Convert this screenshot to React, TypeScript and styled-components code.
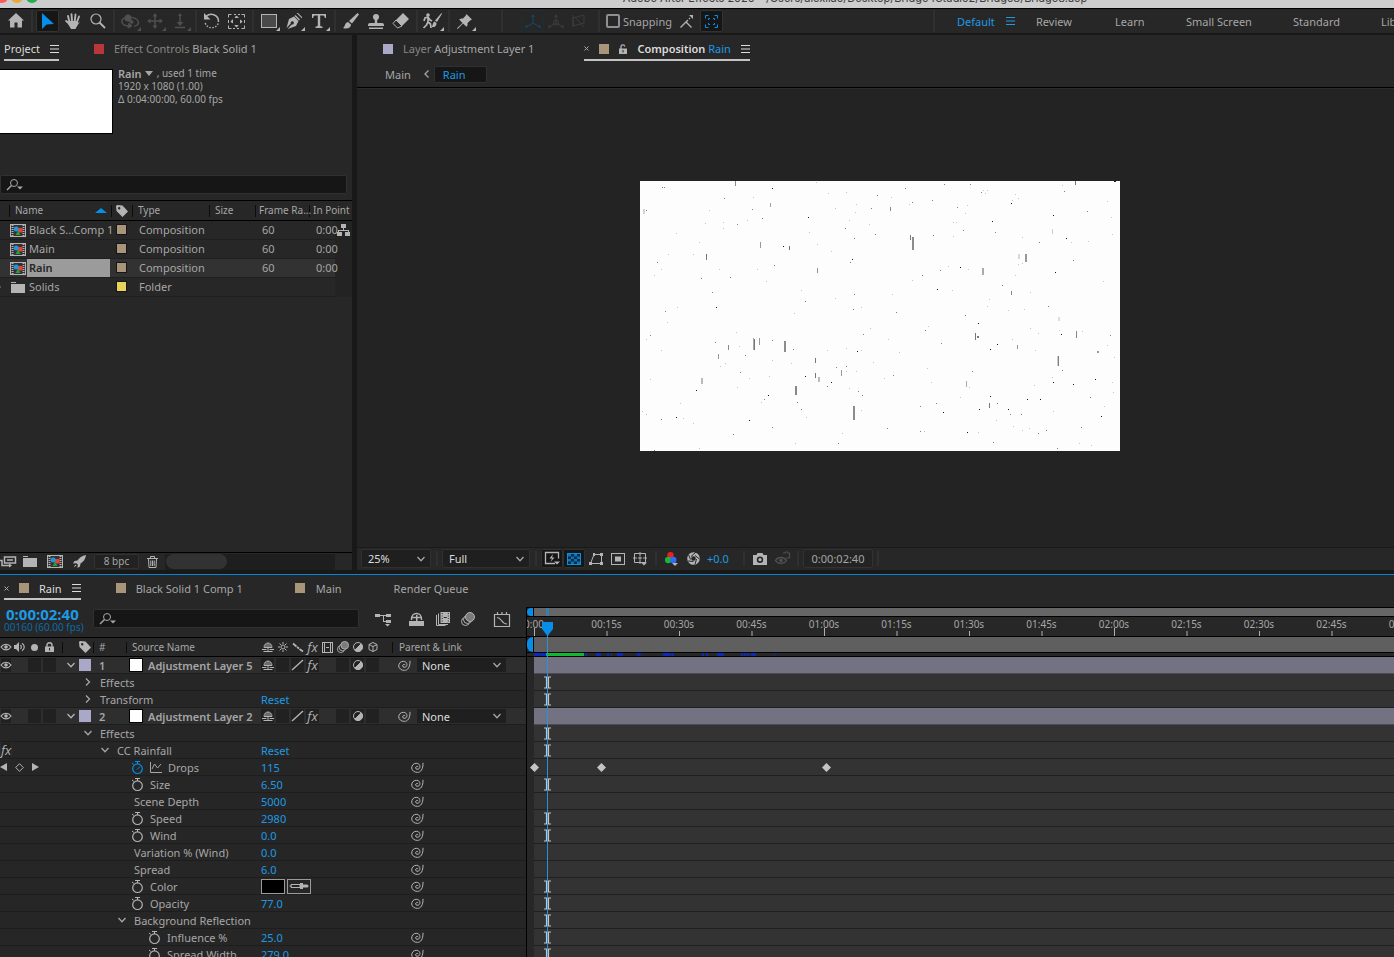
import React from 'react';
import styled, { createGlobalStyle, css } from 'styled-components';

const c = {
  panel: '#272727',
  gutter: '#181818',
  well: '#161616',
  text: '#a6a6a6',
  dim: '#868686',
  bright: '#dcdcdc',
  icon: '#b4b4b4',
  off: '#4f4f4f',
  blue: '#1e9ae4',
  hot: '#068ee8',
  tan: '#a99579',
  lilac: '#a9a8c9',
};

const GlobalStyle = createGlobalStyle`
  * { box-sizing: border-box; }
  html, body { margin: 0; height: 100%; overflow: hidden; background: ${c.gutter}; }
  body { font-family: "Noto Sans", "Open Sans", sans-serif; font-size: 11px; line-height: 13px; color: ${c.text}; }
  button, input, select { font: inherit; color: inherit; margin: 0; padding: 0; border: 0; background: none; border-radius: 0; }
  svg { display: block; flex: none; overflow: visible; }
`;

const Page = styled.div`
  display: flex;
  flex-direction: column;
  height: 100vh;
  min-width: 900px;
  overflow: hidden;
  white-space: nowrap;
`;

/* ---------- window title ---------- */
const TitleBar = styled.header`
  display: flex;
  align-items: flex-end;
  flex: none;
  height: 9px;
  background: #cdcdcd;
  border-bottom: 1px solid #000;
  overflow: hidden;
`;
const Lights = styled.div`
  display: flex;
  gap: 3px;
  margin: 0 0 5px -4px;
`;
const Light = styled.i<{ $c: string }>`
  width: 12px;
  height: 12px;
  border-radius: 50%;
  background: ${p => p.$c};
`;
const Title = styled.h1`
  flex: 1;
  margin: 0 0 2px 278px;
  text-align: center;
  font: 400 11px/16px Inter, "Liberation Sans", sans-serif;
  color: #3c3c3c;
`;

/* ---------- tool bar ---------- */
const Toolbar = styled.nav`
  display: flex;
  align-items: stretch;
  flex: none;
  height: 26px;
  background: ${c.panel};
  border-bottom: 2px solid ${c.gutter};
`;
const Rule = styled.i`
  flex: none;
  width: 2px;
  margin: 1px 0;
  background: #303030;
`;
const Group = styled.div<{ $grow?: boolean; $w?: number }>`
  display: flex;
  align-items: center;
  padding: 0 3px 0 2px;
  ${p => p.$grow && 'flex: 1;'}
  ${p => p.$w && `width: ${p.$w}px;`}
`;
const Tool = styled.button<{ $w?: number; $on?: boolean; $off?: boolean }>`
  position: relative;
  display: grid;
  place-items: center;
  flex: none;
  width: ${p => p.$w ?? 25}px;
  height: 22px;
  color: ${p => (p.$off ? c.off : c.icon)};
  ${p =>
    p.$on &&
    css`
      width: 23px;
      margin: 0 1px;
      background: ${c.well};
      box-shadow: inset 0 0 0 1px #333;
      color: ${c.hot};
      border-radius: 2px;
    `}
`;
const Corner = styled.i`
  position: absolute;
  right: 1px;
  bottom: 1px;
  border-left: 4px solid transparent;
  border-bottom: 4px solid currentColor;
`;
const AxisGroup = styled.div`
  display: flex;
  align-items: center;
  width: 95px;
  padding-left: 18px;
`;
const AxisTool = styled(Tool).attrs({ $w: 23 })`
  color: #3c3c3c;
`;
const AxisOn = styled(AxisTool)`
  color: #12476a;
  box-shadow: inset 0 0 0 1px #1f2c34;
`;
const SnapLabel = styled.label`
  display: flex;
  align-items: center;
  gap: 3px;
  margin-left: 4px;
  width: 68px;
`;
const Check = styled.input`
  appearance: none;
  width: 14px;
  height: 14px;
  border: 2px solid #8f8f8f;
  border-radius: 2px;
`;
const Workspaces = styled.div`
  display: flex;
  align-items: center;
  width: 459px;
  padding-left: 22px;
  overflow: hidden;
`;
const Workspace = styled.a<{ $w: number; $on?: boolean }>`
  display: flex;
  align-items: center;
  justify-content: space-between;
  flex: none;
  width: ${p => p.$w}px;
  color: ${p => (p.$on ? c.blue : c.text)};
  text-decoration: none;
  svg { margin-right: 21px; }
`;

/* ---------- panels ---------- */
const Upper = styled.main`
  display: flex;
  flex: none;
  gap: 5px;
`;
const Panel = styled.section<{ $w?: number }>`
  display: flex;
  flex-direction: column;
  background: ${c.panel};
  ${p => (p.$w ? `flex: 0 0 ${p.$w}px;` : 'flex: 1; min-width: 0;')}
`;
const Tabs = styled.div<{ $h: number; $pad: number }>`
  display: flex;
  flex: none;
  height: ${p => p.$h}px;
  padding-left: ${p => p.$pad}px;
`;
const Tab = styled.button<{ $on?: boolean; $after: number; $gap?: number }>`
  display: flex;
  align-items: center;
  gap: ${p => p.$gap ?? 10}px;
  flex: none;
  margin-right: ${p => p.$after}px;
  padding-top: 3px;
  border-bottom: 2px solid ${p => (p.$on ? '#c4c4c4' : 'transparent')};
  color: ${p => (p.$on ? c.bright : c.text)};
  b { font-weight: 600; }
`;
const Dim = styled.span`
  color: ${c.dim};
`;
const Blue = styled.span`
  color: ${c.blue};
`;
const Swatch = styled.i<{ $c: string; $s?: number }>`
  flex: none;
  width: ${p => p.$s ?? 10}px;
  height: ${p => p.$s ?? 10}px;
  background: ${p => p.$c};
`;

/* ---------- project panel ---------- */
const Info = styled.div`
  display: flex;
  gap: 5px;
  height: 65px;
  margin: 8px 0 41px;
`;
const Thumb = styled.div`
  width: 113px;
  background: #fff;
  border: 1px solid #000;
  border-left: 0;
`;
const Meta = styled.div`
  margin-top: -2px;
  font-size: 10px;
  line-height: 13px;
  p { display: flex; align-items: center; margin: 0; }
  b { font-size: 11px; font-weight: 600; }
  svg { margin: 0 4px 0 3px; }
`;
const Search = styled.label<{ $w: number }>`
  display: flex;
  align-items: center;
  flex: none;
  width: ${p => p.$w}px;
  height: 19px;
  padding-left: 6px;
  background: ${c.well};
  border: 1px solid #303030;
  border-radius: 2px;
  input { flex: 1; min-width: 0; outline: 0; }
`;
const Items = styled.table`
  table-layout: fixed;
  width: 100%;
  margin-top: 6px;
  border-collapse: collapse;
  th {
    height: 20px;
    padding: 0;
    border-top: 1px solid #000;
    border-bottom: 1px solid #000;
    font-size: 10px;
    font-weight: 400;
    text-align: left;
  }
  td {
    height: 19px;
    padding: 0 0 2px 7px;
    border-bottom: 1px solid #1f1f1f;
    line-height: 13px;
  }
  td:last-child { padding: 0; background: #232323; border: 0; }
`;
const Col = styled.col<{ $w: number }>`
  width: ${p => p.$w}px;
`;
const Head = styled.div<{ $ml?: number; $pad?: number }>`
  display: flex;
  align-items: center;
  justify-content: space-between;
  height: 12px;
  margin-left: ${p => p.$ml ?? 0}px;
  padding-left: ${p => p.$pad ?? 5}px;
  border-left: 1px solid #0c0c0c;
  svg { margin-right: 4px; }
`;
const ItemRow = styled.tr<{ $on?: boolean }>`
  background: ${p => (p.$on ? '#323232' : 'transparent')};
  td:first-child { padding: 0; }
`;
const ItemName = styled.div<{ $on?: boolean }>`
  position: relative;
  display: flex;
  align-items: center;
  height: 18px;
  padding-left: 10px;
  > span {
    flex: 1;
    margin: 0 1px;
    padding-left: 2px;
    line-height: 18px;
    ${p => p.$on && 'background: #9b9b9b; color: #262626; font-weight: 600;'}
  }
`;
const IconSlot = styled.i`
  display: grid;
  place-items: center;
  flex: none;
  width: 16px;
  color: ${c.icon};
`;
const Twirl = styled.i`
  position: absolute;
  left: -2px;
  border: 3px solid transparent;
  border-left-color: ${c.dim};
`;
const Chip = styled.span`
  display: grid;
  width: 11px;
  margin: 1px 0 0 -2px;
  border: 1px solid #161616;
`;
const ProjectFoot = styled.footer`
  display: flex;
  align-items: center;
  height: 18px;
  margin-top: auto;
  border-top: 1px solid #000;
`;
const FootButton = styled.button<{ $w: number }>`
  display: grid;
  place-items: center;
  flex: none;
  width: ${p => p.$w}px;
  height: 17px;
  color: ${c.icon};
`;
const Depth = styled.button`
  width: 45px;
  height: 15px;
  margin-left: 2px;
  font-size: 10px;
  border: 1px solid #323232;
  border-radius: 2px;
  background: #222;
`;
const ScrollTrack = styled.div`
  width: 170px;
  height: 16px;
  background: #1e1e1e;
`;
const ScrollThumb = styled.div`
  width: 61px;
  height: 15px;
  margin-left: 1px;
  border-radius: 8px;
  background: #323232;
`;

/* ---------- composition viewer ---------- */
const Crumbs = styled.div`
  display: flex;
  align-items: center;
  height: 27px;
  padding-left: 28px;
  gap: 11px;
  border-bottom: 1px solid #000;
`;
const Crumb = styled.button<{ $on?: boolean }>`
  ${p =>
    p.$on &&
    css`
      width: 53px;
      height: 17px;
      margin-left: -9px;
      padding-left: 8px;
      text-align: left;
      color: ${c.blue};
      background: ${c.well};
      border: 1px solid #303030;
      border-radius: 2px;
    `}
`;
const Viewport = styled.div`
  display: flex;
  justify-content: center;
  padding: 92px 0 96px 9px;
  background: #232323;
  border-top: 1px solid #2c2c2c;
`;
const Frame = styled.svg`
  width: 480px;
  height: 270px;
  background: #fefdfd;
`;
const ViewerBar = styled.footer`
  display: flex;
  align-items: center;
  height: 23px;
  padding: 0 0 1px 4px;
  border-top: 1px solid #1a1a1a;
`;
const PickerBox = styled.span<{ $w: number; $h: number; $flat?: boolean }>`
  display: grid;
  flex: none;
  align-items: center;
  width: ${p => p.$w}px;
  height: ${p => p.$h}px;
  background: #1f1f1f;
  ${p => !p.$flat && 'border: 1px solid #303030; border-radius: 2px;'}
  color: ${c.bright};
  select, svg { grid-area: 1 / 1; }
  select { appearance: none; width: 100%; padding-left: ${p => (p.$flat ? 5 : 6)}px; line-height: 13px; }
  svg { justify-self: end; margin-right: 4px; pointer-events: none; color: ${c.text}; }
`;
const Bar = styled.i<{ $l: number; $r: number }>`
  flex: none;
  width: 2px;
  height: 15px;
  margin: 0 ${p => p.$r}px 0 ${p => p.$l}px;
  background: #303030;
`;
const ViewTool = styled.button<{ $box?: boolean; $off?: boolean }>`
  display: grid;
  place-items: center;
  flex: none;
  width: 22px;
  height: 19px;
  color: ${p => (p.$off ? c.off : c.icon)};
  ${p => p.$box && `background: ${c.well}; box-shadow: inset 0 0 0 1px #303030; border-radius: 2px;`}
`;
const Exposure = styled.button`
  width: 32px;
  padding-left: 3px;
  text-align: left;
  color: ${c.blue};
`;
const TimeBox = styled.button`
  width: 70px;
  height: 19px;
  border: 1px solid #323232;
  border-radius: 2px;
  background: #232323;
`;

/* ---------- timeline ---------- */
const Timeline = styled.section`
  display: flex;
  flex-direction: column;
  flex: 1;
  min-height: 0;
  margin-top: 4px;
  border-top: 1px solid #0b84d8;
  background: ${c.panel};
`;
const Panes = styled.div`
  display: flex;
  flex: 1;
  min-height: 0;
  margin-top: 7px;
`;
const Outline = styled.div`
  flex: 0 0 527px;
  border-right: 1px solid #000;
`;
const OutlineHead = styled.div`
  display: flex;
  height: 31px;
  padding-left: 4px;
  border-bottom: 1px solid #000;
`;
const Clock = styled.div`
  width: 89px;
  color: ${c.blue};
  font-size: 10px;
  strong { display: block; padding-left: 2px; font-size: 15px; line-height: 14px; }
  span { display: block; color: #0b6aa8; }
`;
const HeadTools = styled.div`
  display: flex;
  align-items: center;
  height: 24px;
  margin-left: 10px;
  color: ${c.icon};
`;
const SearchSlot = styled.div`
  padding-top: 2px;
`;
const LayerGrid = styled.div<{ $head?: boolean }>`
  display: grid;
  grid-template-columns: 62px 17px 14px 33px 134px 120px 37px 88px;
  align-items: center;
  height: ${p => (p.$head ? 19 : 17)}px;
  border-bottom: 1px solid ${p => (p.$head ? '#000' : '#1d1d1d')};
  background: ${p => (p.$head ? c.panel : '#2e2e2e')};
  font-size: ${p => (p.$head ? 10 : 11)}px;
`;
const Cells = styled.div`
  display: flex;
  color: ${c.icon};
`;
const Cell = styled.button<{ $w?: number; $box?: boolean }>`
  display: grid;
  place-items: center;
  flex: none;
  width: ${p => p.$w ?? 15}px;
  height: 14px;
  ${p => p.$box && 'background: #212121; border: 0 solid #2e2e2e; border-width: 0 1px; background-clip: padding-box;'}
`;
const ColHead = styled.span<{ $bar?: boolean }>`
  display: flex;
  align-items: center;
  height: 11px;
  padding-left: 5px;
  border-left: ${p => (p.$bar ? '1px solid #0c0c0c' : '0')};
`;
const ParentHead = styled.span`
  grid-column: span 2;
  height: 11px;
  margin-left: 12px;
  padding-left: 6px;
  border-left: 1px solid #0c0c0c;
  line-height: 11px;
`;
const Center = styled.span<{ $pad?: number }>`
  display: grid;
  place-items: center;
  padding-left: ${p => p.$pad ?? 0}px;
  color: ${c.icon};
`;
const Num = styled.b`
  padding-left: 6px;
  font-weight: 600;
`;
const LayerName = styled.div`
  display: flex;
  align-items: center;
  gap: 5px;
  padding-left: 3px;
  font-weight: 600;
`;
const Solid = styled.i`
  width: 14px;
  height: 14px;
  background: #fff;
  border: 1px solid #000;
`;
const PropRow = styled.div`
  display: grid;
  grid-template-columns: 62px 199px 149px 14px;
  align-items: center;
  height: 17px;
  border-bottom: 1px solid #1d1d1d;
  background: #262626;
`;
const PropLabel = styled.div<{ $depth: number; $watch?: boolean }>`
  display: flex;
  align-items: center;
  gap: ${p => (p.$watch ? 6 : 7)}px;
  padding-left: ${p => 21 + 17 * p.$depth - (p.$watch ? 3 : 0)}px;
`;
const Value = styled.button`
  justify-self: start;
  color: ${c.blue};
`;
const ColorPair = styled.div`
  display: flex;
  gap: 2px;
`;
const ColorBox = styled.button<{ $c: string }>`
  display: grid;
  place-items: center;
  width: 24px;
  height: 15px;
  border: 1px solid #9a9a9a;
  background: ${p => p.$c};
  color: ${c.icon};
`;
const KeyNav = styled.div`
  display: flex;
  align-items: center;
  gap: 8px;
  color: ${c.icon};
`;

const Tracks = styled.div`
  position: relative;
  flex: 1;
  min-width: 0;
  overflow: hidden;
`;
const Navigator = styled.div`
  display: flex;
  height: 10px;
  border: solid #000;
  border-width: 1px 0;
  background: #666;
`;
const WorkArea = styled.div`
  display: flex;
  height: 17px;
  border: solid #000;
  border-width: 1px 0;
  background: #5f5f5f;
`;
const Handle = styled.i`
  width: 7px;
  border-right: 1px solid #000;
  border-radius: 6px 0 0 6px;
  background: ${c.hot};
`;
const HandleSlot = styled.div`
  display: flex;
  background: ${c.panel};
`;
const NavMark = styled.i`
  width: 3px;
  margin-left: 12px;
  background: #3a7fae;
`;
const Ruler = styled.div`
  display: flex;
  height: 19px;
  margin-left: -29px;
`;
const Tick = styled.div<{ $wide: boolean; $kind: 'long' | 'short' | 'minor' }>`
  display: flex;
  flex-direction: column;
  align-items: center;
  justify-content: space-between;
  flex: none;
  width: ${p => (p.$wide ? 73 : 72)}px;
  font-size: 10px;
  line-height: 14px;
  &::after {
    content: '';
    width: ${p => (p.$kind === 'minor' ? 2 : 1)}px;
    height: ${p => (p.$kind === 'long' ? 8 : 5)}px;
    margin-top: -3px;
    background: ${p => (p.$kind === 'minor' ? '#6c6c6c' : '#b0b0b0')};
  }
`;
const Cache = styled.svg`
  width: 100%;
  height: 3px;
`;
const CacheRow = styled.div`
  height: 4px;
  border-bottom: 1px solid #000;
`;
const Track = styled.div<{ $layer?: boolean }>`
  position: relative;
  height: 17px;
  margin-left: 7px;
  border-bottom: 1px solid ${p => (p.$layer ? '#4c4c58' : '#202020')};
  background: ${p => (p.$layer ? '#727282' : '#333')};
`;
const Marker = styled.i`
  position: absolute;
  top: 2px;
  width: 9px;
  margin-left: -4px;
  color: #c4c4c4;
`;
const Playhead = styled.i`
  position: absolute;
  top: 15px;
  bottom: 0;
  left: 14px;
  width: 13px;
  pointer-events: none;
  &::after {
    content: '';
    position: absolute;
    top: 13px;
    bottom: 0;
    left: 6px;
    width: 1px;
    background: #2a90d8;
  }
`;

/* ---------- icons ---------- */
type IconProps = { w: number; h: number; sw?: number; fill?: boolean; children: React.ReactNode };
const Icon = ({ w, h, sw = 1, fill, children }: IconProps) => (
  <svg width={w} height={h} viewBox={`0 0 ${w} ${h}`} fill={fill ? 'currentColor' : 'none'} stroke={fill ? 'none' : 'currentColor'} strokeWidth={sw} aria-hidden="true">
    {children}
  </svg>
);
const Menu = () => <Icon w={9} h={8}><path d="M0 .5h9M0 4h9M0 7.5h9" /></Icon>;
const Chevron = ({ dir = 'down' }: { dir?: 'down' | 'right' | 'left' }) => (
  <Icon w={10} h={8} sw={1.3}>
    <path d={dir === 'down' ? 'M1.5 2 5 5.7 8.5 2' : dir === 'right' ? 'M3 .5 6.5 4 3 7.5' : 'M6.5 .5 3 4l3.5 3.5'} />
  </Icon>
);
const Close = () => <Icon w={5} h={5}><path d="M.5 .5l4 4M4.5 .5l-4 4" stroke={c.text} /></Icon>;
const HomeIcon = () => <Icon w={16} h={15} fill><path d="M8 0 0 7.5h2V14.5h4.5V9.5h3v5H14V7.5h2z" /></Icon>;
const ArrowIcon = () => <Icon w={12} h={16} fill><path d="M0 0v16l4.500-4.500L12 11z" /></Icon>;
const HandIcon = () => (
  <Icon w={16} h={16}>
    <path d="M4.500 9 3 3M7 8 6.500 1.200M9.800 8 10.500 1.500M12 9l2-5.500M4.500 11 1.200 8" strokeWidth={1.900} strokeLinecap="round" />
    <path d="M3.200 8 12.800 8 13 10 15 8.500 11.500 14 10.500 16H6L3 11z" fill="currentColor" stroke="none" />
  </Icon>
);
const ZoomIcon = () => <Icon w={16} h={16} sw={1.2}><circle cx="6" cy="6" r="5" /><path d="M9.500 9.500 15 15" strokeWidth={1.800} /></Icon>;
const OrbitIcon = () => (
  <Icon w={18} h={14}>
    <path d="M8 12C2 12-1 8 2 5s13-2 15 2-3 5-4 5" strokeWidth={1.400} />
    <path d="m8 9-1 5 4-2z" fill="currentColor" />
    <circle cx="7" cy="4" r="3.500" fill="currentColor" stroke="none" /><path d="M7 5l5 4" strokeWidth={3} />
  </Icon>
);
const MoveIcon = () => (
  <Icon w={16} h={16}>
    <path d="M8 2v12M2 8h12" strokeWidth={1.500} />
    <path d="M8 0 5.500 3.500h5zM8 16l-2.500-3.500h5zM0 8l3.500-2.500v5zM16 8l-3.500-2.500v5z" fill="currentColor" stroke="none" />
  </Icon>
);
const DollyIcon = () => (
  <Icon w={12} h={16}>
    <path d="M6 2v10M1 14.500h10" strokeWidth={1.500} />
    <path d="M6 0 4 3h4zM6 13 2.500 9h7z" fill="currentColor" stroke="none" />
  </Icon>
);
const RotateIcon = () => (
  <Icon w={17} h={16}>
    <path d="M3 3.500C8-1 16 2 15.500 9" strokeWidth={1.500} />
    <path d="M15.200 10.500C13 16 4 16.500 2 9.500" strokeWidth={1.400} strokeDasharray="1.5 1.5" />
    <path d="M1 0v6.500h6.500z" fill="currentColor" stroke="none" />
  </Icon>
);
const PanBehindIcon = () => (
  <Icon w={17} h={15}>
    <path d="M.5 3.500v-3h3M6 .5h2M10 .5h2M13.500 .5h3v3M16.500 6v3M16.500 11.500v3h-3M11 14.500H9M7 14.500H5M3.500 14.500h-3v-3M.5 9V6" />
    <circle cx="8.500" cy="7.500" r="4.500" strokeDasharray="3.500 3.500" strokeDashoffset="1.800" />
    <path d="M8.500 1.500 6.500 4h4zM8.500 13.500l-2-2.500h4zM2.500 7.500l2.500-2v4zM14.500 7.500 12 5.500v4z" fill="currentColor" stroke="none" />
  </Icon>
);
const RectIcon = () => <Icon w={16} h={14}><rect x=".5" y=".5" width="15" height="13" fill="#4a4a4a" /></Icon>;
const PenIcon = () => (
  <Icon w={16} h={16} fill>
    <path d="M9.500 2 14 6.500l-1 1-4.500-4.500zM10.500 0h1.500l4 4v1.500z" />
    <path fillRule="evenodd" d="M8 3.500 12.500 8 10 13 1.500 16l4.300-4.600a1.600 1.600 0 1 0-1-.9L.5 15 3 6z" />
  </Icon>
);
const TextIcon = () => <Icon w={14} h={14} fill><path d="M0 0h14v4h-1.200C12.600 2 12 1.500 10.500 1.500H8.200V11c0 1.200.5 1.500 2.300 1.600V14h-7v-1.400c1.800-.1 2.300-.4 2.300-1.600V1.500H3.500C2 1.500 1.400 2 1.200 4H0z" /></Icon>;
const BrushIcon = () => (
  <Icon w={16} h={16} fill>
    <path d="M14.500 0 16 1.500 9 10.500 6 8z" /><path d="M5 9l3 2.500C8 15 4 16.500 0 15c2-.5 1.500-5.500 5-6z" />
  </Icon>
);
const StampIcon = () => (
  <Icon w={16} h={15} fill>
    <circle cx="8" cy="3" r="3" /><path d="M6.800 5h2.400v4H14a2 2 0 0 1 2 2v1H0v-1a2 2 0 0 1 2-2h4.800zM1 13.500h14V15H1z" />
  </Icon>
);
const EraserIcon = () => (
  <Icon w={17} h={16}>
    <path d="M11 0 17 6 10 13 4 7z" fill="currentColor" stroke="none" /><path d="M4 7 1 10.500 5.500 15 10 13z" />
  </Icon>
);
const RotoIcon = () => (
  <Icon w={19} h={16}>
    <circle cx="5" cy="2" r="1.800" fill="currentColor" stroke="none" />
    <path d="M1 8l1-3 3-1 2 3 2 1M5 4.500 5 9l2.500 2L8 15M5 9 3.500 12 .5 15" strokeWidth={1.700} />
    <path d="M18.500 0 19 .8 14 9l-2-1.500zM11.500 8.500l2 1.500c0 4-3 4.500-5 4 1.500-1 1-4.500 3-5.500z" fill="currentColor" stroke="none" />
  </Icon>
);
const PinIcon = () => (
  <Icon w={15} h={15} fill>
    <path d="M9.500 0 15 5.500l-1.500.7L10.500 9c.3 1.500 0 2.700-1 3.800L6 9.500.7 15 0 14.300 5.500 9 2.200 5.500c1-.9 2.300-1.300 3.800-1L8.800 1.500z" />
  </Icon>
);
const AxisIcon = ({ v }: { v: number }) =>
  v === 2 ? (
    <Icon w={13} h={14}><path d="M1 4 12 1v8L1 12zM3.500 3.500 12 13M1 1v12" /></Icon>
  ) : (
    <Icon w={16} h={14}>
      <path d="M8 1.500V9L2 12.500M8 9l6 3.500" />{v === 1 && <circle cx="8" cy="8.500" r="2.500" />}
      <path d="M8 0 6 3h4zM0 14l1-3.500 2.500 2.500zM16 14l-1-3.500-2.500 2.500z" fill="currentColor" stroke="none" />
    </Icon>
  );
const SnapArrow = () => (
  <Icon w={13} h={13}>
    <path d="M.5 12.500 6 7l5.500 5.500M6 7l2-2M9 4l1-1" strokeWidth={1.300} /><path d="M9 0h4v4z" fill="currentColor" stroke="none" />
  </Icon>
);
const SnapBox = () => (
  <Icon w={13} h={13}>
    <path d="M.5 3.500v-3h3M9.500 .5h3v3M12.500 9.500v3h-3M3.500 12.500h-3v-3" /><path d="M3.500 5V3.500H5M8 3.500h1.500V5M9.500 8v1.500H8M5 9.500H3.500V8" />
  </Icon>
);
const SearchIcon = () => (
  <Icon w={16} h={12}>
    <circle cx="7" cy="4" r="3.500" /><path d="M4.500 6.500 0 11" strokeWidth={1.500} /><path d="M10 7.500h6L13 10.500z" fill="currentColor" stroke="none" />
  </Icon>
);
const TagIcon = () => <Icon w={12} h={12} fill><path fillRule="evenodd" d="M0 1 1 0l5.500.5L12 6.500 6.500 12 .5 6zM3.200 2a1.200 1.200 0 1 0 0 2.400 1.200 1.200 0 0 0 0-2.400z" fill={c.icon} /></Icon>;
const CompIcon = () => (
  <Icon w={16} h={13}>
    <rect x=".5" y=".5" width="15" height="12" fill="#333" />
    <path d="M2.500 1v11M13.500 1v11" strokeWidth={2} strokeDasharray="1 1" />
    <rect x="8" y="4" width="4.500" height="4.500" fill="#e8403a" stroke="none" />
    <circle cx="6.200" cy="5" r="2.500" fill="#2196dc" stroke="none" />
    <path d="M8 6.500 10.500 11h-5z" fill="#1fa33c" stroke="none" />
  </Icon>
);
const FolderIcon = () => <Icon w={14} h={11} fill><path d="M0 0h5v1H0zM0 2h14v9H0z" /></Icon>;
const FlowIcon = () => <Icon w={13} h={12} fill><path d="M4 0h5v4H7v2h5v2h1v4H8V8h3V7H2v1h3v4H0V8h1V6h5V4H4z" /></Icon>;
const InterpretIcon = () => (
  <Icon w={14} h={12}>
    <path d="M2.500 1h11v6h-11zM5 4h6" strokeWidth={1.500} /><path d="M-4 4.500H0v5h9" strokeWidth={1.500} /><path d="M7 7.500v4l3-2z" fill="currentColor" stroke="none" />
  </Icon>
);
const RocketIcon = () => <Icon w={13} h={13} fill><path d="M13 0C9 .5 6 3 4.500 5.500L1.500 6 0 8.500l3.500-.3 1.300 1.300L4.500 13l2.500-1.500.5-3C10.500 7 12.500 4 13 0zM2.500 9.500.5 12.500l3-2z" /></Icon>;
const TrashIcon = () => <Icon w={11} h={12}><path d="M0 2.500h11M3.500 2V.5h4V2M1.500 2.500l.5 9h7l.5-9M3.800 4.500v5.500M5.500 4.500v5.500M7.200 4.500v5.500" /></Icon>;
const LockOpen = () => (
  <Icon w={8} h={10}><rect x="0" y="4.500" width="8" height="5.500" fill={c.icon} stroke="none" /><path d="M2 5V2.500C2 .5 5.500 .3 5.800 2.500" strokeWidth={1.300} stroke={c.icon} /><path d="M4 6v2.500" stroke={c.panel} /></Icon>
);
const FastPreview = () => (
  <Icon w={15} h={13}><path d="M10 11.500H.5v-11h13v6" strokeWidth={1.300} /><path d="M8 2 4.500 6.500H7L5.500 10 9.500 5.500H7zM9 9.500h6l-3 3z" fill="currentColor" stroke="none" /></Icon>
);
const Checker = () => (
  <Icon w={14} h={12}><rect x=".5" y=".5" width="13" height="11" stroke={c.hot} fill="#0a2b40" /><path d="M1 1h3v2.500H1zM7 1h3v2.500H7zM4 3.500h3V6H4zM10 3.500h3V6h-3zM1 6h3v2.500H1zM7 6h3v2.500H7zM4 8.500h3V11H4zM10 8.500h3V11h-3z" fill="#0c74bb" stroke="none" /></Icon>
);
const MaskIcon = () => (
  <Icon w={14} h={12}><path d="M1.500 10.500 5 1.500h7.500v9z" /><path d="M0 9h3v3H0zM4 0h2v3H4zM11 0h3v3h-3zM11 9h3v3h-3z" fill="currentColor" stroke="none" /></Icon>
);
const SafeIcon = () => <Icon w={14} h={12}><rect x=".5" y=".5" width="13" height="11" /><rect x="4" y="3.500" width="6" height="5" fill="currentColor" stroke="none" /></Icon>;
const GuideIcon = () => (
  <Icon w={15} h={14}><path d="M1.500 1.500h11v9h-11zM7 0v4M7 7.500V12M0 6h4M10 6h4M5 6h4M7 4.500v3" /><path d="M8 10.500h6l-3 3z" fill="currentColor" stroke="none" /></Icon>
);
const RgbIcon = () => (
  <Icon w={13} h={14} fill><circle cx="5.500" cy="3.200" r="3.200" fill="#f21d1d" /><circle cx="3.200" cy="8" r="3.200" fill="#15b83c" /><circle cx="8.300" cy="8" r="3.200" fill="#2f6cf5" /><path d="M7 11h6l-3 3z" /></Icon>
);
const ApertureIcon = () => (
  <Icon w={13} h={13}><circle cx="6.500" cy="6.500" r="4.300" strokeWidth={4} /><path d="M4 4.500 9 0M8 3.500l4.500 3.500M9.500 7 8 12.500M6.500 9.500 1 9M3.500 7.500 1.500 2.500" stroke={c.panel} /></Icon>
);
const CameraIcon = () => (
  <Icon w={14} h={12} fill><path fillRule="evenodd" d="M4.500 0h5l1 2H14v10H0V2h3.500zM7 3.500a3.200 3.200 0 1 0 0 6.400 3.200 3.200 0 0 0 0-6.400z" /><circle cx="7" cy="6.700" r="1.600" /></Icon>
);
const ShowSnap = () => (
  <Icon w={15} h={13}><path d="M.5 8.500C3 4.500 9 4.500 11.500 8.500 9 12.500 3 12.500.5 8.500z" strokeWidth={1.400} /><circle cx="6" cy="8.500" r="1.800" fill="currentColor" stroke="none" /><path d="M8 1h2l.5-1h2l.5 1h1.500v5H11" strokeWidth={1.200} /></Icon>
);
const MiniFlow = () => (
  <Icon w={16} h={13} fill><path d="M0 1h5v3H0zM11 1h5v3h-5zM11 7h5v3h-5zM5 2h6v1H9v5h2v1H8V3H5zM10 11h5l-2.500 2.500z" /></Icon>
);
const ShyBar = () => (
  <Icon w={15} h={13}><path d="M0 8h15v5H0zM7 2h1.500v7H7z" fill="currentColor" stroke="none" /><path d="M2.500 7C2 2 5 .5 7.500 .5S13 2 12.500 7M3 4.500h9" strokeWidth={1.400} /></Icon>
);
const FilmIcon = () => (
  <Icon w={14} h={14}>
    <path d="M4.500 0H14v11H4.500z" fill="currentColor" stroke="none" /><path d="M2.500 1.500v11H12M.5 3v10.500H9.500" />
    <path d="M6.200 1v9M12.300 1v9" stroke={c.panel} strokeDasharray="1 1.500" /><path d="M7.800 5.500h3" stroke={c.panel} />
  </Icon>
);
const BlurIcon = ({ s = 14 }: { s?: number }) => (
  <svg width={s} height={s} viewBox="0 0 14 14" fill={c.panel} stroke="currentColor" aria-hidden="true"><circle cx="4.500" cy="9.500" r="4" /><circle cx="6.500" cy="7.500" r="4" /><circle cx="9" cy="5" r="4.500" fill="#7b7b7b" /></svg>
);
const GraphIcon = () => (
  <Icon w={16} h={15}><path d="M.5 2.500h15v12H.5zM3.500 0v2M8 0v2M12.500 0v2M3 5.500c5 0 4 6.500 10 6.500" strokeWidth={1.200} /></Icon>
);
const EyeIcon = () => <Icon w={10} h={8}><path d="M0 4C2.500 .3 7.500 .3 10 4 7.500 7.700 2.500 7.700 0 4z" strokeWidth={1.200} /><circle cx="5" cy="4" r="1.800" fill="currentColor" stroke="none" /></Icon>;
const SpeakerIcon = () => <Icon w={11} h={10}><path d="M0 3h2l3-3v10L2 7H0z" fill="currentColor" stroke="none" /><path d="M6.500 3c1 1 1 3 0 4M8 1.200c3 2 3 5.600 0 7.600" strokeWidth={1.200} /></Icon>;
const DotIcon = () => <Icon w={7} h={7} fill><circle cx="3.500" cy="3.500" r="3.500" /></Icon>;
const LockIcon = () => <Icon w={9} h={10}><rect y="4.500" width="9" height="5.500" fill="currentColor" stroke="none" /><path d="M2 5V3c0-3 5-3 5 0v2" strokeWidth={1.400} /><path d="M4.500 6v2.500" stroke={c.panel} /></Icon>;
const ShyIcon = () => <Icon w={12} h={10}><path d="M2 5.500C2 -.5 10 -.5 10 5.500zM6 1v8M0 7.500h4.500M7.500 7.500H12M1.500 9.500h9M4 2v3.500M8 2v3.500" /></Icon>;
const SunIcon = () => <Icon w={10} h={10}><circle cx="5" cy="5" r="2" /><path d="M5 0v2M5 8v2M0 5h2M8 5h2M1.500 1.500 3 3M8.500 1.500 7 3M1.500 8.500 3 7M8.500 8.500 7 7" /></Icon>;
const QualityIcon = () => <Icon w={10} h={9}><path d="M0 .5 3.500 3.500M4 4 6 5.500M6.500 6 10 8.500" strokeWidth={1.700} /></Icon>;
const SlashIcon = () => <Icon w={11} h={10}><path d="M0 10 11 0" strokeWidth={1.400} /></Icon>;
const FrameBlend = () => <Icon w={11} h={11}><rect x=".5" y=".5" width="10" height="10" /><path d="M2.500 1v9M8.500 1v9M4 5.500h3" /></Icon>;
const AdjustIcon = () => <Icon w={10} h={10}><circle cx="5" cy="5" r="4.500" /><path d="M1.800 8.200A4.500 4.500 0 0 0 8.200 1.800z" fill="currentColor" /></Icon>;
const CubeIcon = () => <Icon w={10} h={10}><path d="M5 .5 9 2.500v5L5 9.500 1 7.500v-5zM1 2.500l4 2 4-2M5 4.500v5" /></Icon>;
const Spiral = () => (
  <Icon w={13} h={11}><path d="M7.200 4.800C6 3.900 4.600 4.700 4.600 6S7 7.800 8.300 6.500 9 1.600 5.800 1.300 .6 3.600 .7 6 3.400 10.500 6.500 10.400 12.200 7.400 12 .8" /></Icon>
);
const Stopwatch = ({ on }: { on?: boolean }) => (
  <Icon w={13} h={13}>
    <g stroke={on ? c.hot : c.icon}><circle cx="6.500" cy="7.700" r="4.800" strokeWidth={1.200} /><path d="M4 .5h5M6.500 .5v2.500M1 2l1.800 1.400" />{on && <path d="M6 8.500 9 5.500" />}</g>
  </Icon>
);
const GraphSmall = () => <Icon w={12} h={11}><path d="M.5 0v10.500H12M2 7l2.500-5 3 4L11 2" /></Icon>;
const Dropper = () => <Icon w={20} h={6}><path d="M.5 3h2M2 1.500h9v3H2z" /><path d="M11 0h3v1.500h4a1.500 1.500 0 0 1 0 3h-4V6h-3z" fill="currentColor" stroke="none" /></Icon>;
const IBeam = () => <Icon w={9} h={13}><path d="M1 1h2.500v11H1M8 1H5.500v11H8" strokeWidth={1.200} /></Icon>;
const Key = () => <Icon w={9} h={13} fill><path d="M4.500 2 9 6.500 4.500 11 0 6.500z" /></Icon>;
const FxMark = styled.em`
  font: italic 400 13px/14px "Open Sans", "Noto Sans", sans-serif;
  color: ${c.icon};
`;

/* ---------- rain artwork: 3 units per pixel of the frame ---------- */
const streaks: [number, number, number, number, string][] = [
  [285, 0, 3, 14, '#8a8a8a'], [390, 66, 3, 12, '#a0a0a0'], [9, 84, 6, 14, '#d6d6d6'], [360, 183, 3, 18, '#999'],
  [447, 195, 3, 12, '#777'], [198, 219, 3, 18, '#777'], [531, 261, 3, 14, '#909090'], [339, 471, 3, 36, '#aaa'],
  [342, 474, 3, 33, '#777'], [357, 471, 3, 21, '#999'], [432, 480, 6, 34, '#8c8c8c'], [264, 492, 3, 15, '#888'],
  [234, 519, 3, 14, '#999'], [525, 531, 3, 15, '#777'], [525, 576, 3, 15, '#777'], [535, 588, 4, 15, '#bbb'],
  [603, 567, 3, 17, '#999'], [183, 591, 5, 17, '#bbb'], [465, 615, 5, 28, '#888'], [639, 675, 6, 42, '#8c8c8c'],
  [750, 78, 3, 12, '#888'], [810, 162, 3, 15, '#777'], [816, 168, 6, 39, '#8c8c8c'], [1305, 0, 3, 12, '#777'],
  [1236, 144, 4, 14, '#ccc'], [1134, 219, 6, 15, '#d8d8d8'], [1155, 219, 6, 23, '#999'], [1027, 261, 5, 20, '#aaa'],
  [1113, 330, 3, 12, '#888'], [1254, 408, 5, 12, '#ddd'], [1005, 456, 3, 21, '#777'], [1011, 465, 6, 6, '#777'],
  [1308, 450, 3, 20, '#888'], [1131, 492, 3, 12, '#999'], [1371, 510, 6, 6, '#999'], [1251, 525, 3, 29, '#ccc'],
  [1254, 525, 3, 29, '#808080'], [978, 600, 4, 18, '#aaa'], [1047, 666, 3, 14, '#777'], [1422, 0, 6, 4, '#222'],
];
const drops: Record<string, number[][]> = {
  '#161616': [
    [396, 22], [505, 109], [430, 196], [230, 379], [637, 235], [168, 627], [386, 644], [110, 708], [328, 718], [496, 586], [574, 603], [652, 511],
    [1114, 67], [1240, 103], [1278, 171], [961, 259], [1246, 273], [892, 325], [1015, 427], [1264, 460], [1073, 490], [1051, 505], [1240, 604],
    [1300, 610], [1366, 595], [1050, 645], [1161, 655], [1201, 655], [1018, 685], [1105, 685], [982, 754], [910, 694], [1057, 121], [1384, 706],
  ],
  '#808080': [
    [68, 19], [73, 19], [253, 53], [367, 112], [19, 88], [292, 130], [337, 85], [616, 142], [706, 160], [643, 172], [631, 244], [694, 82],
    [712, 43], [403, 253], [271, 289], [184, 292], [217, 334], [52, 244], [496, 361], [640, 385], [76, 391], [31, 463], [226, 484], [316, 522],
    [397, 478], [460, 505], [670, 460], [589, 559], [562, 616], [301, 574], [484, 685], [472, 664], [373, 655], [64, 715], [397, 739], [280, 760],
    [595, 787], [655, 631], [667, 643], [796, 22], [817, 64], [877, 58], [913, 10], [991, 10], [1024, 34], [880, 163], [1066, 154], [969, 147],
    [1342, 91], [1300, 238], [1198, 184], [901, 268], [847, 283], [1087, 313], [1225, 376], [769, 394], [976, 403], [856, 448], [904, 487],
    [1411, 463], [997, 571], [1267, 568], [760, 583], [889, 667], [841, 676], [1072, 667], [1351, 649], [1111, 700], [1144, 700], [1219, 748],
    [841, 751], [742, 742], [1324, 739], [1060, 784], [1252, 802], [1273, 31], [952, 79], [43, 808], [1195, 756], [643, 340], [620, 556],
  ],
  '#c4c4c4': [
    [529, 4], [565, 37], [619, 34], [649, 70], [646, 94], [586, 82], [628, 118], [688, 130], [508, 154], [532, 190], [574, 211], [340, 50],
    [208, 88], [322, 118], [250, 124], [250, 142], [196, 127], [109, 156], [178, 184], [160, 220], [85, 220], [64, 265], [43, 284], [238, 265],
    [352, 265], [379, 301], [484, 328], [463, 397], [112, 379], [82, 424], [289, 454], [19, 475], [298, 496], [64, 508], [241, 556], [256, 547],
    [397, 538], [454, 547], [562, 508], [619, 502], [664, 508], [649, 571], [619, 571], [700, 544], [691, 442], [586, 352], [664, 378], [30, 594],
    [292, 619], [328, 592], [388, 586], [364, 664], [121, 667], [7, 691], [19, 700], [130, 712], [160, 727], [499, 709], [664, 688], [607, 757],
    [466, 787], [178, 802], [628, 622], [754, 49], [808, 70], [1036, 37], [1126, 40], [1135, 52], [1117, 58], [1030, 28], [1042, 28], [982, 73],
    [976, 97], [940, 124], [949, 124], [940, 166], [1267, 13], [1402, 61], [1414, 109], [1417, 160], [1345, 181], [1294, 184], [1147, 169],
    [1135, 250], [1147, 247], [1126, 283], [925, 256], [985, 265], [817, 298], [937, 328], [757, 340], [1048, 355], [1042, 376], [1105, 388],
    [1153, 385], [1171, 334], [1390, 301], [865, 436], [745, 475], [778, 514], [862, 562], [733, 592], [874, 604], [1171, 442], [1195, 457],
    [1118, 475], [1186, 508], [1258, 448], [1327, 451], [1402, 493], [1423, 529], [1237, 589], [1183, 613], [1417, 604], [1420, 634],
    [988, 619], [961, 649], [1393, 676], [1239, 691], [1069, 718], [1147, 748], [1168, 742], [1120, 736], [1014, 754], [853, 751], [1318, 787], [1354, 793],
  ],
};
const Rain = () => (
  <Frame viewBox="0 0 1440 810" shapeRendering="crispEdges" role="img" aria-label="Rain composition preview">
    {Object.entries(drops).map(([fill, pts]) => (
      <path key={fill} fill={fill} d={pts.map(([x, y]) => `M${Math.floor(x / 3) * 3} ${Math.floor(y / 3) * 3}h3v3h-3z`).join('')} />
    ))}
    {streaks.map(([x, y, w, h, f]) => <rect key={`${x}-${y}`} x={x} y={y} width={w} height={h} fill={f} />)}
  </Frame>
);

/* ---------- data ---------- */
const items = [
  { name: 'Black S...Comp 1', type: 'Composition', color: c.tan, rate: '60', at: '0:00' },
  { name: 'Main', type: 'Composition', color: c.tan, rate: '60', at: '0:00' },
  { name: 'Rain', type: 'Composition', color: c.tan, rate: '60', at: '0:00', on: true },
  { name: 'Solids', type: 'Folder', color: '#e6d558', rate: '', at: '' },
];

type Row =
  | { kind: 'layer'; n: number; name: string }
  | { kind: 'prop'; label: string; depth: number; twirl?: 'down' | 'right'; watch?: boolean; keyed?: boolean; value?: string; color?: boolean; fx?: boolean; link?: boolean; mark?: boolean };
const rows: Row[] = [
  { kind: 'layer', n: 1, name: 'Adjustment Layer 5' },
  { kind: 'prop', label: 'Effects', depth: 0, twirl: 'right', mark: true },
  { kind: 'prop', label: 'Transform', depth: 0, twirl: 'right', value: 'Reset', mark: true },
  { kind: 'layer', n: 2, name: 'Adjustment Layer 2' },
  { kind: 'prop', label: 'Effects', depth: 0, twirl: 'down', mark: true },
  { kind: 'prop', label: 'CC Rainfall', depth: 1, twirl: 'down', value: 'Reset', fx: true, mark: true },
  { kind: 'prop', label: 'Drops', depth: 3, watch: true, keyed: true, value: '115', link: true },
  { kind: 'prop', label: 'Size', depth: 3, watch: true, value: '6.50', link: true, mark: true },
  { kind: 'prop', label: 'Scene Depth', depth: 3, value: '5000', link: true },
  { kind: 'prop', label: 'Speed', depth: 3, watch: true, value: '2980', link: true, mark: true },
  { kind: 'prop', label: 'Wind', depth: 3, watch: true, value: '0.0', link: true, mark: true },
  { kind: 'prop', label: 'Variation % (Wind)', depth: 3, value: '0.0', link: true },
  { kind: 'prop', label: 'Spread', depth: 3, value: '6.0', link: true },
  { kind: 'prop', label: 'Color', depth: 3, watch: true, color: true, link: true, mark: true },
  { kind: 'prop', label: 'Opacity', depth: 3, watch: true, value: '77.0', link: true, mark: true },
  { kind: 'prop', label: 'Background Reflection', depth: 2, twirl: 'down', mark: true },
  { kind: 'prop', label: 'Influence %', depth: 4, watch: true, value: '25.0', link: true, mark: true },
  { kind: 'prop', label: 'Spread Width', depth: 4, watch: true, value: '279.0', link: true, mark: true },
];
const currentTime = 13;
const keyTimes = [0, 67, 292];
const ticks = ['0:00', '00:15s', '00:30s', '00:45s', '01:00s', '01:15s', '01:30s', '01:45s', '02:00s', '02:15s', '02:30s', '02:45s', '03:00s'];
const cached = [[7, 12], [58, 2], [69, 5], [80, 2], [84, 1], [90, 6], [110, 3], [114, 1], [136, 7], [144, 3], [175, 2], [179, 2], [190, 7], [214, 2], [217, 2], [220, 2], [224, 5], [247, 1]];

const Picker = ({ w, h = 19, value, label, flat }: { w: number; h?: number; value: string; label: string; flat?: boolean }) => (
  <PickerBox $w={w} $h={h} $flat={flat}>
    <select aria-label={label} defaultValue={value}><option>{value}</option></select>
    <Chevron />
  </PickerBox>
);

const LayerRow = ({ n, name }: { n: number; name: string }) => (
  <LayerGrid>
    <Cells>
      <Cell $w={12} $box aria-label="Visible"><EyeIcon /></Cell><Cell aria-label="Audio" /><Cell $box aria-label="Solo" /><Cell $box aria-label="Lock" />
    </Cells>
    <Center><Chevron /></Center>
    <Swatch $c={c.lilac} $s={12} />
    <Num>{n}</Num>
    <LayerName><Solid />{name}</LayerName>
    <Cells>
      <Cell $box aria-label="Shy"><ShyIcon /></Cell><Cell $box aria-label="Collapse" /><Cell $box aria-label="Quality"><SlashIcon /></Cell>
      <Cell $box aria-label="Effects"><FxMark>fx</FxMark></Cell><Cell aria-label="Frame blend" /><Cell $box aria-label="Motion blur" />
      <Cell $box aria-label="Adjustment layer"><AdjustIcon /></Cell><Cell $box aria-label="3D layer" />
    </Cells>
    <Center $pad={11}><Spiral /></Center>
    <Picker w={89} h={14} value="None" label={`Parent of ${name}`} flat />
  </LayerGrid>
);

const Property = (r: Extract<Row, { kind: 'prop' }>) => (
  <PropRow>
    <span>
      {r.fx && <Cell $w={12} $box aria-label="Effect enabled"><FxMark>fx</FxMark></Cell>}
      {r.keyed && (
        <KeyNav>
          <Icon w={7} h={8} fill><path d="M7 0v8L0 4z" /></Icon>
          <Icon w={9} h={9}><path d="M4.500 .7 8.300 4.500 4.500 8.300.7 4.500z" /></Icon>
          <Icon w={7} h={8} fill><path d="M0 0v8l7-4z" /></Icon>
        </KeyNav>
      )}
    </span>
    <PropLabel $depth={r.depth} $watch={r.watch}>
      {r.twirl && <Chevron dir={r.twirl} />}
      {r.watch && <Stopwatch on={r.keyed} />}
      {r.keyed && <GraphSmall />}
      {r.label}
    </PropLabel>
    {r.color ? (
      <ColorPair><ColorBox $c="#000" aria-label="Color" /><ColorBox $c="transparent" aria-label="Pick color"><Dropper /></ColorBox></ColorPair>
    ) : (
      <Value>{r.value}</Value>
    )}
    {r.link && <Center><Spiral /></Center>}
  </PropRow>
);

export default function App() {
  return (
    <Page>
      <GlobalStyle />
      <TitleBar>
        <Lights><Light $c="#fc5b57" /><Light $c="#e5a93c" /><Light $c="#1fb14a" /></Lights>
        <Title>Adobe After Effects 2020 - /Users/alexliao/Desktop/Bridge4Studio2/Bridge8/Bridge8.aep</Title>
      </TitleBar>

      <Toolbar>
        <Tool $w={31} aria-label="Home"><HomeIcon /></Tool>
        <Rule />
        <Group>
          <Tool $on aria-label="Selection"><ArrowIcon /></Tool>
          <Tool aria-label="Hand"><HandIcon /></Tool>
          <Tool aria-label="Zoom"><ZoomIcon /></Tool>
        </Group>
        <Rule />
        <Group>
          <Tool $off aria-label="Orbit"><OrbitIcon /><Corner /></Tool>
          <Tool $off aria-label="Pan"><MoveIcon /><Corner /></Tool>
          <Tool $off aria-label="Dolly"><DollyIcon /><Corner /></Tool>
        </Group>
        <Rule />
        <Group>
          <Tool aria-label="Rotate"><RotateIcon /></Tool>
          <Tool aria-label="Pan behind"><PanBehindIcon /></Tool>
        </Group>
        <Rule />
        <Group>
          <Tool aria-label="Rectangle"><RectIcon /><Corner /></Tool>
          <Tool aria-label="Pen"><PenIcon /><Corner /></Tool>
          <Tool aria-label="Type"><TextIcon /><Corner /></Tool>
        </Group>
        <Rule />
        <Group>
          <Tool aria-label="Brush"><BrushIcon /></Tool>
          <Tool aria-label="Clone stamp"><StampIcon /></Tool>
          <Tool aria-label="Eraser"><EraserIcon /></Tool>
        </Group>
        <Rule />
        <Group><Tool aria-label="Roto brush"><RotoIcon /><Corner /></Tool></Group>
        <Rule />
        <Group $w={51}><Tool aria-label="Puppet pin"><PinIcon /><Corner /></Tool></Group>
        <Rule />
        <AxisGroup>
          <AxisOn aria-label="Local axis"><AxisIcon v={0} /></AxisOn>
          <AxisTool aria-label="World axis"><AxisIcon v={1} /></AxisTool>
          <AxisTool aria-label="View axis"><AxisIcon v={2} /></AxisTool>
        </AxisGroup>
        <Rule />
        <Group $grow>
          <SnapLabel><Check type="checkbox" />Snapping</SnapLabel>
          <Tool aria-label="Snap edges"><SnapArrow /></Tool>
          <Tool $on aria-label="Snap features"><SnapBox /></Tool>
        </Group>
        <Rule />
        <Workspaces>
          <Workspace href="#default" $w={79} $on>Default <Menu /></Workspace>
          <Workspace href="#review" $w={79}>Review</Workspace>
          <Workspace href="#learn" $w={71}>Learn</Workspace>
          <Workspace href="#small" $w={107}>Small Screen</Workspace>
          <Workspace href="#standard" $w={88}>Standard</Workspace>
          <Workspace href="#libraries" $w={60}>Libraries</Workspace>
        </Workspaces>
      </Toolbar>

      <Upper>
        <Panel $w={352}>
          <Tabs $h={26} $pad={4}>
            <Tab $on $after={35}>Project<Menu /></Tab>
            <Tab $after={0}><Swatch $c="#b8373b" /><span><Dim>Effect Controls </Dim>Black Solid 1</span></Tab>
          </Tabs>
          <Info>
            <Thumb />
            <Meta>
              <p><b>Rain</b><Icon w={8} h={5} fill><path d="M0 0h8L4 5z" /></Icon>, used 1 time</p>
              <p>1920 x 1080 (1.00)</p>
              <p>Δ 0:04:00:00, 60.00 fps</p>
            </Meta>
          </Info>
          <Search $w={347}><SearchIcon /><input aria-label="Search project" /></Search>
          <Items>
            <colgroup>{[111, 21, 77, 46, 54, 26, 17].map((w, i) => <Col key={i} $w={w} />)}</colgroup>
            <thead>
              <tr>
                <th><Head $ml={9}>Name<Icon w={12} h={5} fill><path d="M6 0 12 5H0z" fill={c.hot} /></Icon></Head></th>
                <th><Head $pad={4}><TagIcon /></Head></th>
                <th><Head>Type</Head></th>
                <th><Head>Size</Head></th>
                <th><Head $pad={3}>Frame Ra...</Head></th>
                <th colSpan={2}><Head $pad={3}>In Point</Head></th>
              </tr>
            </thead>
            <tbody>
              {items.map((it, i) => (
                <ItemRow key={it.name} $on={it.on}>
                  <td>
                    <ItemName $on={it.on}>
                      {!it.rate && <Twirl />}
                      <IconSlot>{it.rate ? <CompIcon /> : <FolderIcon />}</IconSlot>
                      <span>{it.name}</span>
                    </ItemName>
                  </td>
                  <td><Chip><Swatch $c={it.color} $s={9} /></Chip></td>
                  <td>{it.type}</td>
                  <td />
                  <td>{it.rate}</td>
                  <td>{it.at}</td>
                  <td>{i === 0 && <Center><FlowIcon /></Center>}</td>
                </ItemRow>
              ))}
            </tbody>
          </Items>
          <ProjectFoot>
            <FootButton $w={17} aria-label="Interpret footage"><InterpretIcon /></FootButton>
            <FootButton $w={26} aria-label="New folder"><FolderIcon /></FootButton>
            <FootButton $w={24} aria-label="New composition"><CompIcon /></FootButton>
            <FootButton $w={25} aria-label="Project settings"><RocketIcon /></FootButton>
            <Depth>8 bpc</Depth>
            <FootButton $w={26} aria-label="Delete"><TrashIcon /></FootButton>
            <ScrollTrack><ScrollThumb /></ScrollTrack>
          </ProjectFoot>
        </Panel>

        <Panel>
          <Tabs $h={26} $pad={26}>
            <Tab $after={50}><Swatch $c={c.lilac} /><span><Dim>Layer </Dim>Adjustment Layer 1</span></Tab>
            <Tab $on $after={0}>
              <Close /><Swatch $c={c.tan} /><LockOpen /><span><b>Composition</b> <Blue>Rain</Blue></span><Menu />
            </Tab>
          </Tabs>
          <Crumbs><Crumb>Main</Crumb><Chevron dir="left" /><Crumb $on>Rain</Crumb></Crumbs>
          <Viewport><Rain /></Viewport>
          <ViewerBar>
            <Picker w={70} value="25%" label="Magnification" />
            <Bar $l={5} $r={4} />
            <Picker w={88} value="Full" label="Resolution" />
            <Bar $l={5} $r={4} />
            <ViewTool $box aria-label="Fast previews"><FastPreview /></ViewTool>
            <ViewTool $box aria-label="Transparency grid"><Checker /></ViewTool>
            <ViewTool aria-label="Mask visibility"><MaskIcon /></ViewTool>
            <ViewTool aria-label="Region of interest"><SafeIcon /></ViewTool>
            <ViewTool aria-label="Guides"><GuideIcon /></ViewTool>
            <Bar $l={4} $r={3} />
            <ViewTool aria-label="Channels"><RgbIcon /></ViewTool>
            <ViewTool aria-label="Reset exposure"><ApertureIcon /></ViewTool>
            <Exposure>+0.0</Exposure>
            <Bar $l={7} $r={4} />
            <ViewTool aria-label="Take snapshot"><CameraIcon /></ViewTool>
            <ViewTool $off aria-label="Show snapshot"><ShowSnap /></ViewTool>
            <Bar $l={4} $r={4} />
            <TimeBox>0:00:02:40</TimeBox>
            <Bar $l={4} $r={0} />
          </ViewerBar>
        </Panel>
      </Upper>

      <Timeline>
        <Tabs $h={25} $pad={4}>
          <Tab $on $after={35}><Close /><Swatch $c={c.tan} />Rain<Menu /></Tab>
          <Tab $after={52}><Swatch $c={c.tan} />Black Solid 1 Comp 1</Tab>
          <Tab $after={52} $gap={11}><Swatch $c={c.tan} />Main</Tab>
          <Tab $after={0}>Render Queue</Tab>
        </Tabs>
        <Panes>
          <Outline>
            <OutlineHead>
              <Clock><strong>0:00:02:40</strong><span>00160 (60.00 fps)</span></Clock>
              <SearchSlot><Search $w={266}><SearchIcon /><input aria-label="Search layers" /></Search></SearchSlot>
              <HeadTools>
                <FootButton $w={28} aria-label="Mini flowchart"><MiniFlow /></FootButton>
                <FootButton $w={38} aria-label="Hide shy layers"><ShyBar /></FootButton>
                <FootButton $w={15} aria-label="Frame blending"><FilmIcon /></FootButton>
                <FootButton $w={36} aria-label="Motion blur"><BlurIcon /></FootButton>
                <FootButton $w={32} aria-label="Graph editor"><GraphIcon /></FootButton>
              </HeadTools>
            </OutlineHead>
            <LayerGrid $head>
              <Cells>
                <Cell $w={12} aria-label="Video"><EyeIcon /></Cell><Cell aria-label="Audio"><SpeakerIcon /></Cell>
                <Cell aria-label="Solo"><DotIcon /></Cell><Cell aria-label="Lock"><LockIcon /></Cell>
              </Cells>
              <ColHead $bar />
              <Center><TagHead><TagIcon /></TagHead></Center>
              <ColHead $bar>#</ColHead>
              <ColHead $bar>Source Name</ColHead>
              <Cells>
                <Cell aria-label="Shy"><ShyIcon /></Cell><Cell aria-label="Collapse"><SunIcon /></Cell><Cell aria-label="Quality"><QualityIcon /></Cell>
                <Cell aria-label="Effect"><FxMark>fx</FxMark></Cell><Cell aria-label="Frame blend"><FrameBlend /></Cell>
                <Cell aria-label="Motion blur"><BlurIcon s={12} /></Cell><Cell aria-label="Adjustment"><AdjustIcon /></Cell><Cell aria-label="3D"><CubeIcon /></Cell>
              </Cells>
              <ParentHead>Parent &amp; Link</ParentHead>
            </LayerGrid>
            {rows.map((r, i) => (r.kind === 'layer' ? <LayerRow key={i} n={r.n} name={r.name} /> : <Property key={i} {...r} />))}
          </Outline>

          <Tracks>
            <Navigator><HandleSlot><Handle /></HandleSlot><NavMark /></Navigator>
            <Ruler>
              {ticks.map((t, i) => <Tick key={t} $wide={i % 2 === 1} $kind={i % 2 ? 'minor' : i % 4 ? 'short' : 'long'}>{t}</Tick>)}
            </Ruler>
            <WorkArea><HandleSlot><Handle /></HandleSlot></WorkArea>
            <CacheRow>
              <Cache>
                {cached.map(([x, w]) => <rect key={x} x={x} width={w} height="3" fill="#0a2bb8" />)}
                <rect x="19" width="38" height="3" fill="#10b834" />
              </Cache>
            </CacheRow>
            {rows.map((r, i) => (
              <Track key={i} $layer={r.kind === 'layer'}>
                {r.kind === 'prop' && r.mark && <Marker style={{ left: currentTime }}><IBeam /></Marker>}
                {r.kind === 'prop' && r.keyed && keyTimes.map(x => <Marker key={x} style={{ left: x }}><Key /></Marker>)}
              </Track>
            ))}
            <Playhead><Icon w={13} h={14} fill><path d="M1 0h11v7l-5.500 7L1 7z" fill={c.hot} /></Icon></Playhead>
          </Tracks>
        </Panes>
      </Timeline>
    </Page>
  );
}

const TagHead = styled.span`
  margin-right: 9px;
`;
